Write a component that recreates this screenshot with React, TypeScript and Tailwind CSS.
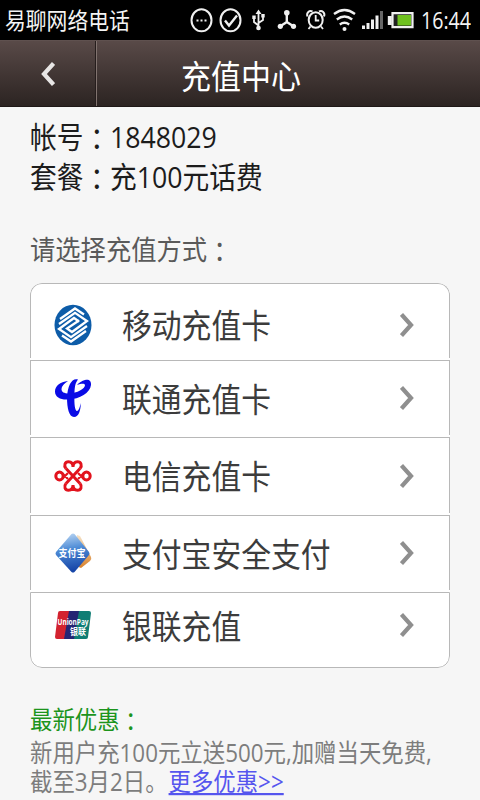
import type { ReactNode } from "react";
import clsx from "clsx";

const SANS = "font-['Open_Sans','Noto_Sans_CJK_SC',sans-serif]";

// The phone's display font is taller than it is wide
function Tall({ className, children }: { className?: string; children: ReactNode }) {
  return (
    <span className={clsx("inline-block origin-center scale-y-110 whitespace-nowrap", className)}>
      {children}
    </span>
  );
}

// Full-width colon that sits in the middle of its cell
function Colon() {
  return (
    <span lang="zh-TW" className="relative top-[0.07em] font-['Noto_Sans_CJK_TC',sans-serif]">
      ：
    </span>
  );
}

function StatusBar() {
  return (
    <div className="flex h-10 items-center bg-black pl-[5px] text-[#f4f4f4]">
      <Tall className="w-[185px] text-[20.8px] leading-10">易聊网络电话</Tall>
      <svg width="231" height="40" viewBox="190 0 231 40" fill="none" stroke="#f0f0f0" strokeWidth="2">
        {/* chat */}
        <ellipse cx="201.5" cy="20.3" rx="10" ry="11" />
        <path d="M196.5 20.5h2M200.5 20.5h2M204.5 20.5h2" />
        {/* check */}
        <ellipse cx="230.5" cy="20.3" rx="10" ry="11" />
        <path d="M225 20.5l4 5 8-10" strokeWidth="2.4" />
        {/* usb */}
        <path d="M258.5 12v16M258.5 25.5l-4.5-3.5v-4M258.5 23l4.5-3v-4" strokeWidth="1.8" />
        <path d="M255.5 14l3-4.5 3 4.5zM252.3 15.500h3.400v3.400h-3.400zM261.300 14h3.400v3.400h-3.400z" fill="#f0f0f0" stroke="none" />
        <circle cx="258.5" cy="28" r="2.3" fill="#f0f0f0" stroke="none" />
        {/* network share */}
        <path d="M286.8 13v9l-7 4.500M286.8 22l7 4.500" strokeWidth="2.4" />
        <g fill="#f0f0f0" stroke="none">
          <circle cx="286.8" cy="12.8" r="2.8" />
          <circle cx="280.3" cy="26.3" r="2.6" />
          <circle cx="293.5" cy="26.3" r="2.6" />
        </g>
        {/* alarm */}
        <ellipse cx="315.7" cy="20" rx="7" ry="7.8" />
        <path d="M315.7 15v5.500h3.500M310.5 26.500l-2 2.500M321 26.500l2 2.500" strokeWidth="1.8" />
        <path d="M307.5 16.500c-1.500-4 2-6.500 5-5M324 16.500c1.500-4-2-6.500-5-5" />
        {/* wifi */}
        <path d="M334 14q10.500-8 21 0M336.8 19.500q7.700-6 15.400 0M339.8 24.500q4.700-3.500 9.400 0" strokeWidth="2.3" />
        <circle cx="344.5" cy="29" r="2" fill="#f0f0f0" stroke="none" />
        {/* signal */}
        <g stroke="none" fill="#f0f0f0">
          <path d="M362 25.500h3v3.500h-3zM366.500 23h3v6h-3zM371 19.500h3v9.500h-3zM375.500 15.500h3v13.500h-3z" />
          <path d="M380 11h3v18h-3z" fill="#666" />
        </g>
        {/* battery */}
        <path d="M392.500 13.200h20v14h-20z" fill="#222" strokeWidth="2.2" />
        <path d="M387.800 16h4v9h-4z" fill="#f0f0f0" stroke="none" />
        <path d="M397.500 15h13.500v10.500h-13.500z" fill="#6fc11f" stroke="none" />
      </svg>
      <span className="mt-0.5 inline-block scale-y-[1.17] text-[19.6px] leading-none">16:44</span>
    </div>
  );
}

function Header() {
  return (
    <header className="flex h-[67px] border-y border-t-[#5f514f] border-b-[#1f1817] bg-linear-to-b from-[#594a48] to-[#2c2422] text-white">
      <button className="flex w-[97px] shrink-0 items-center justify-center border-r border-[#81736f] shadow-[inset_-1px_0_#251d1c]">
        <svg width="14" height="24" viewBox="0 0 14 24" fill="none" stroke="#e8e6e5" strokeWidth="4.2">
          <path d="M12.500 1.500L3 12l9.500 10.500" />
        </svg>
      </button>
      <h1 className="flex items-center pl-[84px] text-[30px] leading-none">
        <Tall className="mt-1.5">充值中心</Tall>
      </h1>
    </header>
  );
}

function MobileLogo() {
  return (
    <svg width="38" height="42" viewBox="0 0 38 42" fill="none" stroke="#fff" strokeWidth="2.3">
      <ellipse cx="19" cy="21" rx="18.5" ry="20.2" fill="#0d5ca8" stroke="none" />
      <path d="M6 15L21 4.500l9 6M5 20L21 8.800 33 17 18 28l-5-3.500 12-8" />
      <path d="M32 27L17 37.500l-9-6M33 22L17 33.200 5 25l15-11 5 3.500" />
    </svg>
  );
}

function TelecomLogo() {
  return (
    <svg width="38" height="42" viewBox="0 0 38 42" fill="#0a0be6">
      <path d="M14 4C6 5 1 9 1 14.500 1 20.500 7 23 14 22.500 26 22 36 16 37 8c.5-5-3-6-6-5C28 4 25 5.500 23 8c4-1.500 7.500-2 8 0 0 4-8 8-16 8.500-5 0-7.500-1.500-7.500-4.500C7.500 9 10 7 14 4z" />
      <path d="M24 2.500c-6-2-10.500 6-11 18C13 31 15 40 20 40c5 0 6.500-7 7-14-1.500 5-2.500 8-4 8-2 0-3-7-2.500-16C20.500 11 21 6 24 2.500z" />
    </svg>
  );
}

function UnicomLogo() {
  return (
    <svg width="38" height="34" viewBox="0 0 38 34" fill="none" stroke="#e2131d" strokeWidth="3">
      <path d="M12 9.500L26 24.500M26 9.500L12 24.500" />
      <path d="M12 9.500C9.500 6.500 11 2.800 14.500 2.800 17.500 2.800 19 5 19 8 19 5 20.500 2.800 23.500 2.800 27 2.800 28.500 6.500 26 9.500" />
      <path d="M12 24.500C9.500 27.500 11 31.200 14.500 31.200 17.500 31.200 19 29 19 26 19 29 20.500 31.200 23.500 31.200 27 31.200 28.500 27.500 26 24.500" />
      <ellipse cx="5.500" cy="17" rx="3.700" ry="4" />
      <ellipse cx="32.500" cy="17" rx="3.700" ry="4" />
      <path d="M8.500 14.500L14 20M8.500 19.500L14 14M29.500 14.500L24 20M29.500 19.500L24 14" strokeWidth="2.2" />
    </svg>
  );
}

function AlipayLogo() {
  return (
    <svg width="38" height="42" viewBox="0 0 38 42">
      <defs>
        <linearGradient id="alipay" x1="0" y1="0" x2="0.15" y2="1">
          <stop offset="0" stopColor="#c3dcf5" />
          <stop offset=".45" stopColor="#4d8bd6" />
          <stop offset="1" stopColor="#1746a8" />
        </linearGradient>
        <linearGradient id="alipay-back" x1="0" y1="0" x2="0" y2="1">
          <stop offset="0" stopColor="#f5e3c8" />
          <stop offset="1" stopColor="#d9822b" />
        </linearGradient>
      </defs>
      <path d="M23 3l3 1 11 21q1 2-1 4l-9 7-7-3z" fill="url(#alipay-back)" />
      <path d="M17.500 2q1.500-1 3 0L35 20q1 1.500 0 3L20.500 40q-1.500 1-3 0L2 23q-1-1.500 0-3z" fill="url(#alipay)" />
      <text x="4.500" y="25" fontSize="10" fontWeight="700" fill="#fff" textLength="27" lengthAdjust="spacingAndGlyphs" className="font-['Noto_Sans_CJK_SC',sans-serif]">
        支付宝
      </text>
    </svg>
  );
}

function UnionPayLogo() {
  return (
    <svg width="38" height="30" viewBox="0 0 38 30">
      <path d="M6 1h12l-5 28H3q-2 0-2-2L4 3q0-2 2-2z" fill="#d3222f" />
      <path d="M15 1h12l-5 28H10z" fill="#252574" />
      <path d="M25 1h10q2 0 2 2l-3 24q0 2-2 2H20z" fill="#0f7d74" />
      <text x="3.500" y="14.500" fontSize="8.500" fontWeight="700" fill="#fff" textLength="31" lengthAdjust="spacingAndGlyphs" className="font-['Open_Sans',sans-serif]">
        UnionPay
      </text>
      <text x="16" y="24.500" fontSize="9" fontWeight="700" fill="#fff" textLength="16" lengthAdjust="spacingAndGlyphs" className="font-['Noto_Sans_CJK_SC',sans-serif]">
        银联
      </text>
    </svg>
  );
}

const METHODS = [
  { label: "移动充值卡", icon: <MobileLogo />, row: "h-[77px]", box: "rounded-t-xl pt-[7px]" },
  { label: "联通充值卡", icon: <TelecomLogo />, row: "h-[77px]", box: "" },
  { label: "电信充值卡", icon: <UnicomLogo />, row: "h-[78px]", box: "" },
  { label: "支付宝安全支付", icon: <AlipayLogo />, row: "h-[77px]", box: "" },
  { label: "银联充值", icon: <UnionPayLogo />, row: "h-[76px]", box: "rounded-b-xl border-b pb-[10px]" },
];

function MethodList() {
  return (
    <ul className="mx-[30px] mt-[15px] overflow-hidden rounded-xl bg-white">
      {METHODS.map(({ label, icon, row, box }, i) => (
        <li key={label} className={clsx(row, i < METHODS.length - 1 && "pb-[2px]")}>
          <button className={clsx("flex h-full w-full items-center border-x border-t border-[#b8b8b8] pl-[23px] pr-[35px] text-left", box)}>
            <span className="w-[68px] shrink-0">{icon}</span>
            <Tall className="mt-[3px] text-[29.8px] leading-none text-[#3c3c3c]">{label}</Tall>
            <svg width="14" height="24" viewBox="0 0 14 24" fill="none" stroke="#8f8f8f" strokeWidth="4.2" className="ml-auto">
              <path d="M1.500 1.500L11 12 1.500 22.500" />
            </svg>
          </button>
        </li>
      ))}
    </ul>
  );
}

export default function App() {
  return (
    <div className={clsx("h-[800px] w-[480px] overflow-hidden bg-[#f6f6f6]", SANS)}>
      <StatusBar />
      <Header />
      <section className="px-[30px] pt-[9px] text-[26.7px] leading-10 text-[#1c1c1c]">
        <p className="h-10">
          <Tall>帐号<Colon />1848029</Tall>
        </p>
        <p className="h-10">
          <Tall>套餐<Colon />充100元话费</Tall>
        </p>
        <p className="mt-8 h-10 text-[25.3px] text-[#5a5a5a]">
          <Tall>请选择充值方式<Colon /></Tall>
        </p>
      </section>
      <MethodList />
      <section className="px-[30px] pt-[35px] text-[22.4px] leading-[30px] text-[#7d7d7d]">
        <p className="h-[35px] text-[#1c941c]">
          <Tall>最新优惠<Colon /></Tall>
        </p>
        <p className="h-[29px]">
          <Tall className="leading-[26px]">新用户充100元立送500元,加赠当天免费,</Tall>
        </p>
        <p className="h-[30px]">
          <Tall className="leading-[26px]">
            截至3月2日。
            <a className="ml-px text-[#5555ee] underline decoration-2 underline-offset-2">更多优惠&gt;&gt;</a>
          </Tall>
        </p>
      </section>
    </div>
  );
}
